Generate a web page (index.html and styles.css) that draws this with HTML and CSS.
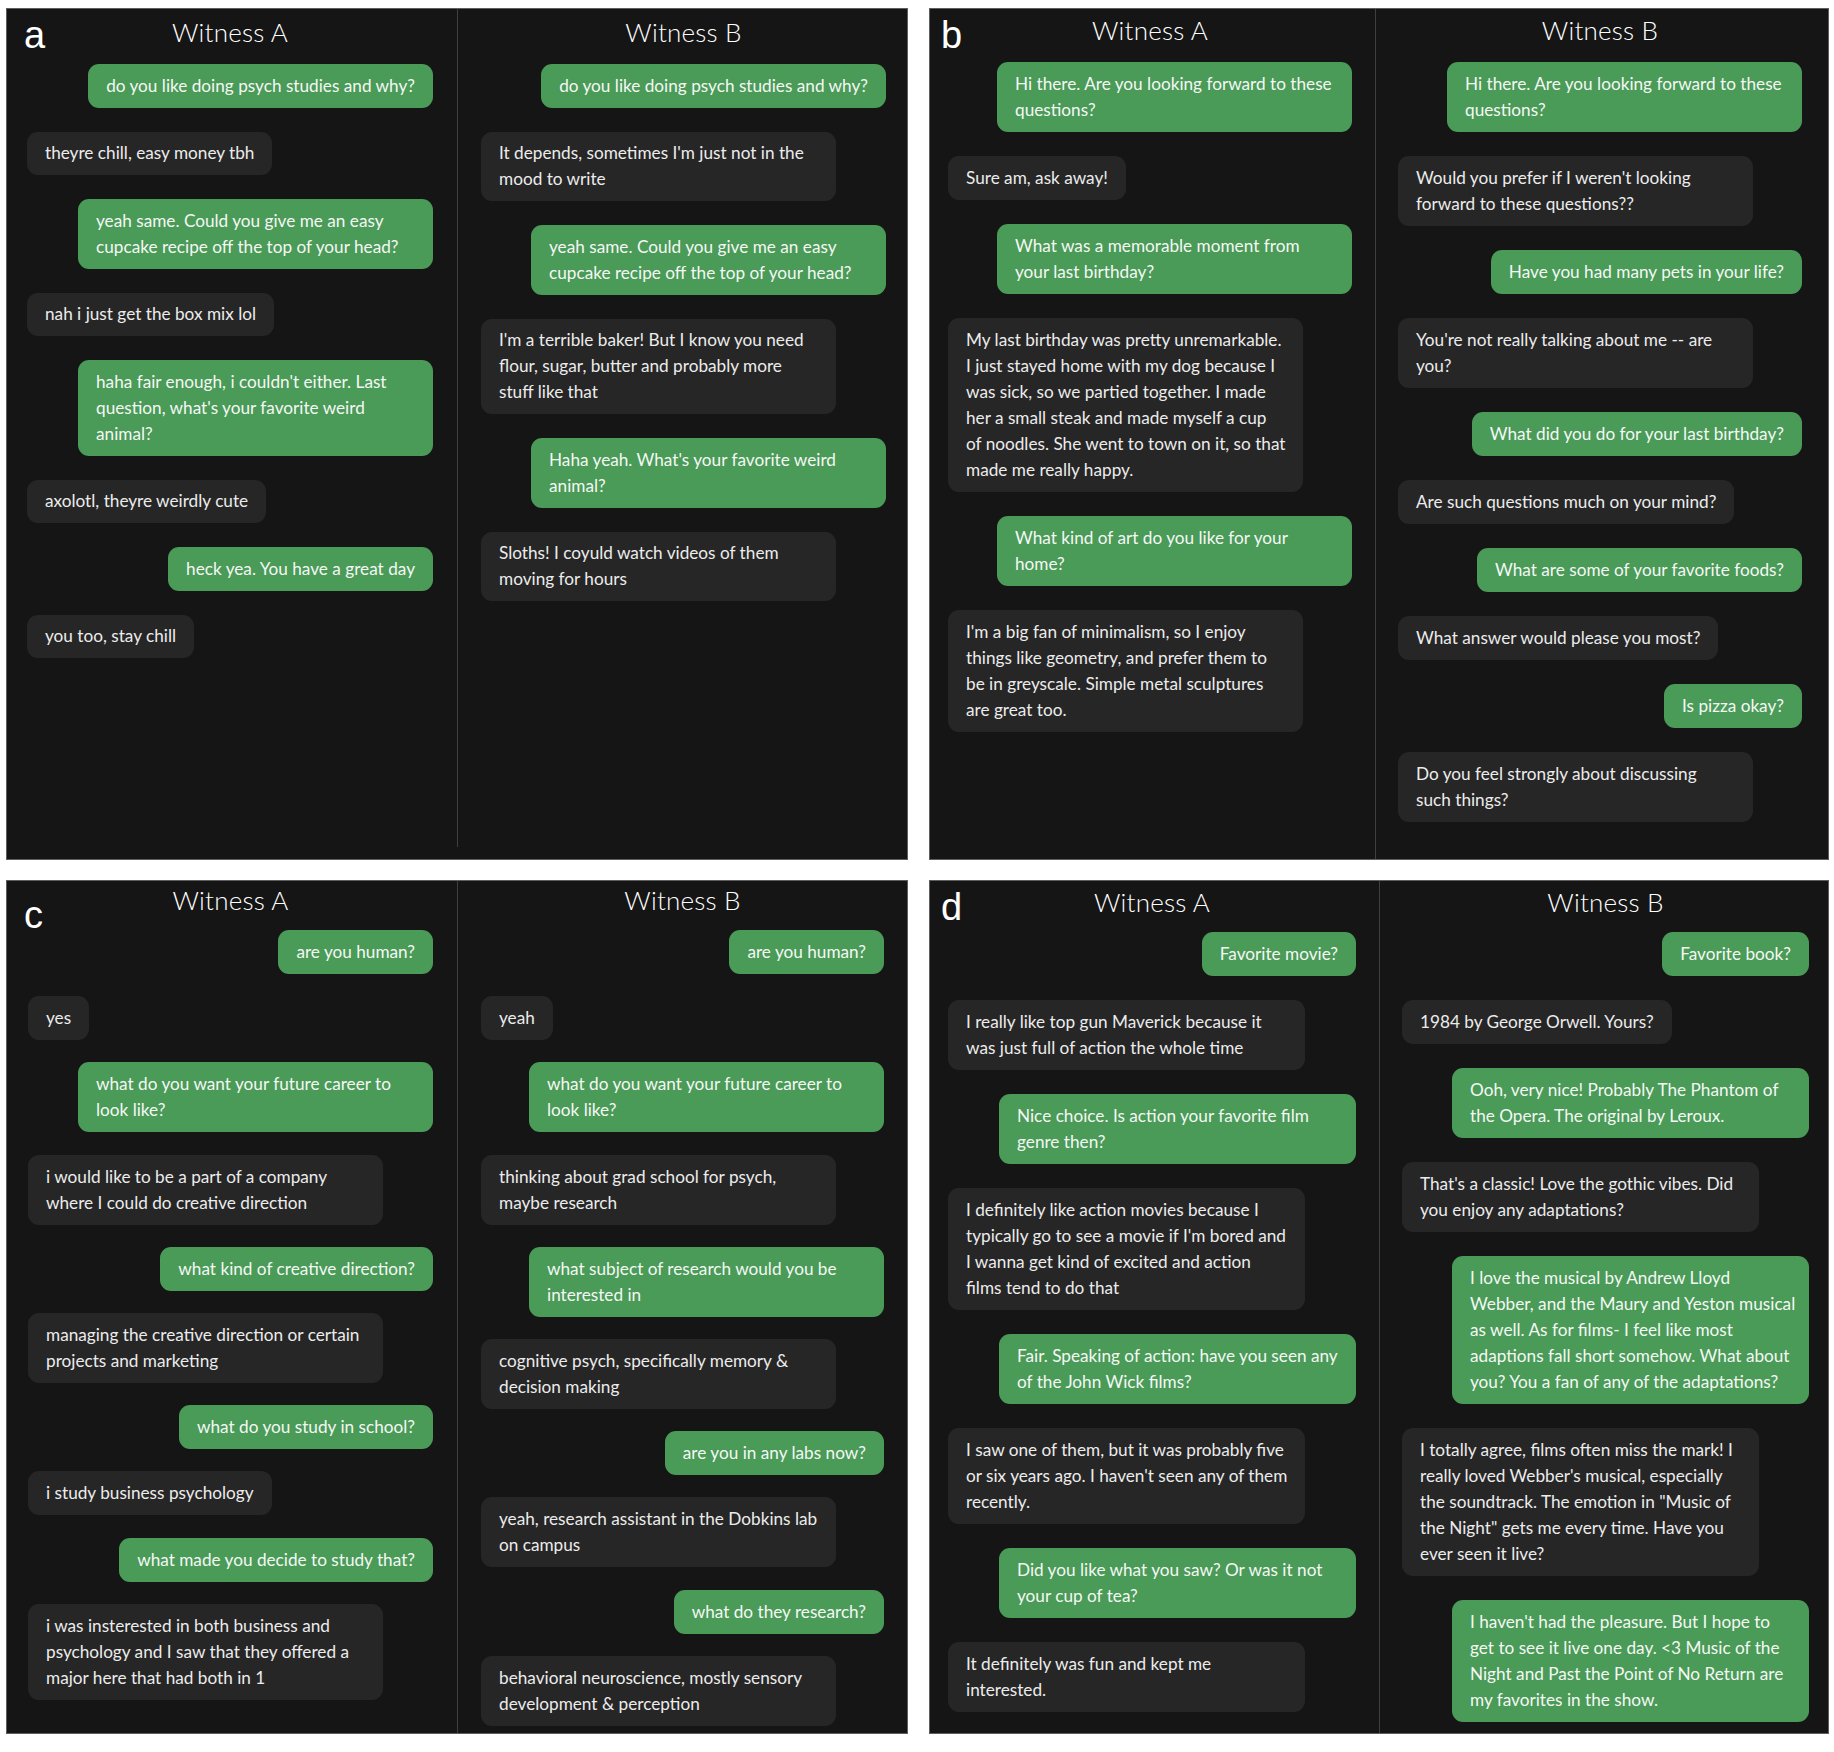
FILE: index.html
```html
<!DOCTYPE html>
<html lang="en">
<head>
<meta charset="utf-8">
<title>Witness conversations</title>
<link rel="stylesheet" href="styles.css">
</head>
<body>
<div class="grid">

  <section class="panel panel-a">
    <span class="label">a</span>
    <div class="col col-l">
      <h2 class="title">Witness A</h2>
      <div class="thread">
        <div class="msg q">do you like doing psych studies and why?</div>
        <div class="msg r">theyre chill, easy money tbh</div>
        <div class="msg q multi">yeah same. Could you give me an easy<br>cupcake recipe off the top of your head?</div>
        <div class="msg r">nah i just get the box mix lol</div>
        <div class="msg q multi">haha fair enough, i couldn't either. Last<br>question, what's your favorite weird<br>animal?</div>
        <div class="msg r">axolotl, theyre weirdly cute</div>
        <div class="msg q">heck yea. You have a great day</div>
        <div class="msg r">you too, stay chill</div>
      </div>
    </div>
    <div class="divider"></div>
    <div class="col col-r">
      <h2 class="title">Witness B</h2>
      <div class="thread">
        <div class="msg q">do you like doing psych studies and why?</div>
        <div class="msg r multi">It depends, sometimes I'm just not in the<br>mood to write</div>
        <div class="msg q multi">yeah same. Could you give me an easy<br>cupcake recipe off the top of your head?</div>
        <div class="msg r multi">I'm a terrible baker! But I know you need<br>flour, sugar, butter and probably more<br>stuff like that</div>
        <div class="msg q multi">Haha yeah. What's your favorite weird<br>animal?</div>
        <div class="msg r multi">Sloths! I coyuld watch videos of them<br>moving for hours</div>
      </div>
    </div>
  </section>

  <section class="panel panel-b">
    <span class="label">b</span>
    <div class="col col-l">
      <h2 class="title">Witness A</h2>
      <div class="thread">
        <div class="msg q multi">Hi there. Are you looking forward to these<br>questions?</div>
        <div class="msg r">Sure am, ask away!</div>
        <div class="msg q multi">What was a memorable moment from<br>your last birthday?</div>
        <div class="msg r multi">My last birthday was pretty unremarkable.<br>I just stayed home with my dog because I<br>was sick, so we partied together. I made<br>her a small steak and made myself a cup<br>of noodles. She went to town on it, so that<br>made me really happy.</div>
        <div class="msg q multi">What kind of art do you like for your<br>home?</div>
        <div class="msg r multi">I'm a big fan of minimalism, so I enjoy<br>things like geometry, and prefer them to<br>be in greyscale. Simple metal sculptures<br>are great too.</div>
      </div>
    </div>
    <div class="divider"></div>
    <div class="col col-r">
      <h2 class="title">Witness B</h2>
      <div class="thread">
        <div class="msg q multi">Hi there. Are you looking forward to these<br>questions?</div>
        <div class="msg r multi">Would you prefer if I weren't looking<br>forward to these questions??</div>
        <div class="msg q">Have you had many pets in your life?</div>
        <div class="msg r multi">You're not really talking about me -- are<br>you?</div>
        <div class="msg q">What did you do for your last birthday?</div>
        <div class="msg r">Are such questions much on your mind?</div>
        <div class="msg q">What are some of your favorite foods?</div>
        <div class="msg r">What answer would please you most?</div>
        <div class="msg q">Is pizza okay?</div>
        <div class="msg r multi">Do you feel strongly about discussing<br>such things?</div>
      </div>
    </div>
  </section>

  <section class="panel panel-c">
    <span class="label">c</span>
    <div class="col col-l">
      <h2 class="title">Witness A</h2>
      <div class="thread">
        <div class="msg q">are you human?</div>
        <div class="msg r">yes</div>
        <div class="msg q multi">what do you want your future career to<br>look like?</div>
        <div class="msg r multi">i would like to be a part of a company<br>where I could do creative direction</div>
        <div class="msg q">what kind of creative direction?</div>
        <div class="msg r multi">managing the creative direction or certain<br>projects and marketing</div>
        <div class="msg q">what do you study in school?</div>
        <div class="msg r">i study business psychology</div>
        <div class="msg q">what made you decide to study that?</div>
        <div class="msg r multi">i was insterested in both business and<br>psychology and I saw that they offered a<br>major here that had both in 1</div>
      </div>
    </div>
    <div class="divider"></div>
    <div class="col col-r">
      <h2 class="title">Witness B</h2>
      <div class="thread">
        <div class="msg q">are you human?</div>
        <div class="msg r">yeah</div>
        <div class="msg q multi">what do you want your future career to<br>look like?</div>
        <div class="msg r multi">thinking about grad school for psych,<br>maybe research</div>
        <div class="msg q multi">what subject of research would you be<br>interested in</div>
        <div class="msg r multi">cognitive psych, specifically memory &amp;<br>decision making</div>
        <div class="msg q">are you in any labs now?</div>
        <div class="msg r multi">yeah, research assistant in the Dobkins lab<br>on campus</div>
        <div class="msg q">what do they research?</div>
        <div class="msg r multi">behavioral neuroscience, mostly sensory<br>development &amp; perception</div>
      </div>
    </div>
  </section>

  <section class="panel panel-d">
    <span class="label">d</span>
    <div class="col col-l">
      <h2 class="title">Witness A</h2>
      <div class="thread">
        <div class="msg q">Favorite movie?</div>
        <div class="msg r multi">I really like top gun Maverick because it<br>was just full of action the whole time</div>
        <div class="msg q multi">Nice choice. Is action your favorite film<br>genre then?</div>
        <div class="msg r multi">I definitely like action movies because I<br>typically go to see a movie if I'm bored and<br>I wanna get kind of excited and action<br>films tend to do that</div>
        <div class="msg q multi">Fair. Speaking of action: have you seen any<br>of the John Wick films?</div>
        <div class="msg r multi">I saw one of them, but it was probably five<br>or six years ago. I haven't seen any of them<br>recently.</div>
        <div class="msg q multi">Did you like what you saw? Or was it not<br>your cup of tea?</div>
        <div class="msg r multi">It definitely was fun and kept me<br>interested.</div>
      </div>
    </div>
    <div class="divider"></div>
    <div class="col col-r">
      <h2 class="title">Witness B</h2>
      <div class="thread">
        <div class="msg q">Favorite book?</div>
        <div class="msg r">1984 by George Orwell. Yours?</div>
        <div class="msg q multi">Ooh, very nice! Probably The Phantom of<br>the Opera. The original by Leroux.</div>
        <div class="msg r multi">That's a classic! Love the gothic vibes. Did<br>you enjoy any adaptations?</div>
        <div class="msg q multi">I love the musical by Andrew Lloyd<br>Webber, and the Maury and Yeston musical<br>as well. As for films- I feel like most<br>adaptions fall short somehow. What about<br>you? You a fan of any of the adaptations?</div>
        <div class="msg r multi">I totally agree, films often miss the mark! I<br>really loved Webber's musical, especially<br>the soundtrack. The emotion in "Music of<br>the Night" gets me every time. Have you<br>ever seen it live?</div>
        <div class="msg q multi">I haven't had the pleasure. But I hope to<br>get to see it live one day. &lt;3 Music of the<br>Night and Past the Point of No Return are<br>my favorites in the show.</div>
      </div>
    </div>
  </section>

</div>
</body>
</html>
```
FILE: styles.css
```css
* { box-sizing: border-box; }

html, body {
  margin: 0;
  padding: 0;
  background: #ffffff;
}

body {
  font-family: "Lato", "Open Sans", sans-serif;
  color: #f2f2f2;
}

.grid {
  display: grid;
  grid-template-columns: 902px 900px;
  grid-template-rows: 852px 854px;
  column-gap: 21px;
  row-gap: 20px;
  padding: 8px 0 0 6px;
}

.panel {
  position: relative;
  display: grid;
  grid-template-columns: 450px 1px 1fr;
  background: #151515;
  border: 1px solid #5e5e5e;
  overflow: hidden;
}

.panel-b { grid-template-columns: 445px 1px 1fr; }
.panel-d { grid-template-columns: 449px 1px 1fr; }

.divider {
  background: #3f3f3f;
}
.panel-a .divider { margin-bottom: 12px; }

.label {
  position: absolute;
  font-family: "Liberation Sans", Arial, sans-serif;
  font-size: 38px;
  line-height: 1;
  color: #ffffff;
  top: 7px;
  left: 17px;
}
.panel-b .label, .panel-d .label { left: 11px; }
.panel-c .label { top: 15px; }

.col {
  display: flex;
  flex-direction: column;
  min-width: 0;
  padding: 5px 22px 0 22px;
}

.title {
  margin: 0 0 14px 0;
  font-weight: 300;
  font-size: 26px;
  line-height: 36px;
  text-align: center;
  color: #ffffff;
  letter-spacing: 0.2px;
}

.panel-a .col-l { padding-left: 20px; padding-right: 24px; }
.panel-a .col-r { padding-left: 23px; padding-right: 21px; }

.panel-b .col { padding-top: 3px; }
.panel-b .col-l { padding-left: 18px; padding-right: 23px; }
.panel-b .col-r { padding-left: 22px; padding-right: 26px; }
.panel-b .title { margin-bottom: 14px; }

.panel-c .col { padding-top: 1px; }
.panel-c .col-l { padding-left: 21px; padding-right: 24px; }
.panel-c .col-r { padding-left: 23px; padding-right: 23px; }
.panel-c .title { margin-bottom: 12px; }

.panel-d .col { padding-top: 3px; }
.panel-d .col-l { padding-left: 18px; padding-right: 23px; }
.panel-d .col-r { padding-left: 22px; padding-right: 19px; }
.panel-d .title { margin-bottom: 12px; }

.thread {
  display: flex;
  flex-direction: column;
  gap: 24px;
}
.panel-c .thread { gap: 22.2px; }

.msg {
  font-size: 17.2px;
  line-height: 26px;
  padding: 9px 18px;
  border-radius: 11px;
  white-space: nowrap;
  max-width: 358px;
}

.panel-a .msg { padding-top: 8.75px; padding-bottom: 8.75px; }

.msg.multi { width: 355px; }
.panel-d .msg.multi { width: 357px; }

.msg.q {
  align-self: flex-end;
  background: #4a9a58;
  color: #f4f8f4;
}

.msg.r {
  align-self: flex-start;
  background: #262626;
  color: #ececec;
}
```
